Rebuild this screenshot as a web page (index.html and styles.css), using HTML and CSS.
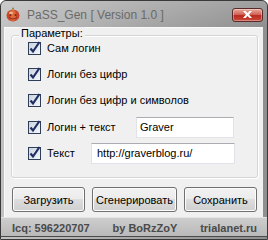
FILE: index.html
```html
<!DOCTYPE html>
<html lang="ru">
<head>
    <meta charset="UTF-8">
    <title>PaSS_Gen</title>
    <link rel="stylesheet" href="styles.css">
</head>
<body>
    <div class="window">
        <div class="titlebar">
            <svg class="app-icon" width="14" height="15" viewBox="0 0 14 15">
                <path d="M6 2 L7 0 L8 2" fill="#6b7d2e"/>
                <ellipse cx="7" cy="8.5" rx="6.5" ry="6" fill="#c9472a"/>
                <ellipse cx="7" cy="8.5" rx="3" ry="6" fill="#e06a3a"/>
                <ellipse cx="5" cy="6" rx="2" ry="1.5" fill="#f4b48a"/>
                <path d="M3 10 Q7 14 11 10" fill="none" stroke="#8c2a16" stroke-width="1"/>
                <circle cx="4.5" cy="8" r="1" fill="#7a2410"/>
                <circle cx="9.5" cy="8" r="1" fill="#7a2410"/>
            </svg>
            <span class="title">PaSS_Gen [ Version 1.0 ]</span>
            <div class="close-btn">
                <svg width="9" height="7" viewBox="0 0 9 7">
                    <path d="M0 0 H2.5 L4.5 2 L6.5 0 H9 L6 3.5 L9 7 H6.5 L4.5 5 L2.5 7 H0 L3 3.5 Z" fill="#fff"/>
                </svg>
            </div>
        </div>

        <div class="client">
            <div class="group">
                <span class="group-title">Параметры:</span>
                <div class="option">
                    <svg class="check" width="14" height="14" viewBox="0 0 14 14">
                        <rect x="0.5" y="1.5" width="12" height="12" fill="url(#cbg)" stroke="#2f3e58"/>
                        <path d="M2.5 7.5 L5 10.5 L11.5 1" fill="none" stroke="#1f2f63" stroke-width="2.2"/>
                    </svg>
                    <span>Сам логин</span>
                </div>
                <div class="option">
                    <svg class="check" width="14" height="14" viewBox="0 0 14 14">
                        <rect x="0.5" y="1.5" width="12" height="12" fill="url(#cbg)" stroke="#2f3e58"/>
                        <path d="M2.5 7.5 L5 10.5 L11.5 1" fill="none" stroke="#1f2f63" stroke-width="2.2"/>
                    </svg>
                    <span>Логин без цифр</span>
                </div>
                <div class="option">
                    <svg class="check" width="14" height="14" viewBox="0 0 14 14">
                        <rect x="0.5" y="1.5" width="12" height="12" fill="url(#cbg)" stroke="#2f3e58"/>
                        <path d="M2.5 7.5 L5 10.5 L11.5 1" fill="none" stroke="#1f2f63" stroke-width="2.2"/>
                    </svg>
                    <span>Логин без цифр и символов</span>
                </div>
                <div class="option option-input">
                    <svg class="check" width="14" height="14" viewBox="0 0 14 14">
                        <rect x="0.5" y="1.5" width="12" height="12" fill="url(#cbg)" stroke="#2f3e58"/>
                        <path d="M2.5 7.5 L5 10.5 L11.5 1" fill="none" stroke="#1f2f63" stroke-width="2.2"/>
                    </svg>
                    <span class="label-wide">Логин + текст</span>
                    <input class="field field-short" type="text" value="Graver">
                </div>
                <div class="option">
                    <svg class="check" width="14" height="14" viewBox="0 0 14 14">
                        <rect x="0.5" y="1.5" width="12" height="12" fill="url(#cbg)" stroke="#2f3e58"/>
                        <path d="M2.5 7.5 L5 10.5 L11.5 1" fill="none" stroke="#1f2f63" stroke-width="2.2"/>
                    </svg>
                    <span class="label-narrow">Текст</span>
                    <input class="field field-long" type="text" value="http://graverblog.ru/">
                </div>
            </div>

            <div class="buttons">
                <button class="btn btn-load">Загрузить</button>
                <button class="btn btn-gen">Сгенерировать</button>
                <button class="btn btn-save">Сохранить</button>
            </div>
        </div>

        <div class="statusbar">
            <span>Icq: 596220707</span>
            <span>by BoRzZoY</span>
            <span>trialanet.ru</span>
        </div>
    </div>

    <svg width="0" height="0" class="defs">
        <defs>
            <linearGradient id="cbg" x1="0" y1="0" x2="1" y2="1">
                <stop offset="0" stop-color="#c9d2de"/>
                <stop offset="1" stop-color="#f6f8fa"/>
            </linearGradient>
        </defs>
    </svg>
</body>
</html>
```

FILE: styles.css
```css
* {
    box-sizing: border-box;
}

body {
    margin: 0;
    font-family: "Liberation Sans", Arial, sans-serif;
    font-size: 11px;
    background: #fff;
}

.defs {
    display: block;
}

.window {
    width: 268px;
    height: 240px;
    display: flex;
    flex-direction: column;
    background: linear-gradient(to right, #c2c2c2, #a8a8a8 50%, #8f8f8f);
    border: 1px solid #3a3a3a;
    border-radius: 6px 6px 0 0;
    overflow: hidden;
}

.titlebar {
    height: 26px;
    display: flex;
    align-items: center;
    flex-shrink: 0;
    padding-left: 5px;
    background: linear-gradient(to bottom, rgba(255,255,255,0.15), rgba(0,0,0,0));
}

.app-icon {
    margin-right: 7px;
    margin-top: 1px;
}

.title {
    color: #6a6a6a;
    font-size: 12px;
    margin-top: 1px;
}

.close-btn {
    margin-left: auto;
    margin-right: 4px;
    margin-top: 1px;
    width: 31px;
    height: 14px;
    border: 1px solid #5a2a2a;
    border-radius: 3px;
    background: linear-gradient(to bottom, #e7a99a, #d4665a 45%, #b8291f 55%, #cc4a3c);
    display: flex;
    align-items: center;
    justify-content: center;
    box-shadow: inset 0 0 0 1px rgba(255,255,255,0.35);
}

.client {
    margin: 0 4px 0 3px;
    height: 190px;
    background: #f0f0f0;
    border-left: 1px solid #fafafa;
    border-top: 1px solid #fafafa;
    display: flex;
    flex-direction: column;
}

.group {
    margin: 7px 5px 0 6px;
    padding: 0 0 0 16px;
    height: 143px;
    border: 1px solid #d5d5d5;
    border-radius: 3px;
    box-shadow: inset 1px 1px 0 #fff, 1px 1px 0 #fff;
}

.group-title {
    display: block;
    width: max-content;
    height: 13px;
    line-height: 13px;
    margin: -9px 0 0 -9px;
    padding: 0 2px;
    background: #f0f0f0;
    color: #000;
}

.option {
    display: flex;
    align-items: center;
    height: 26px;
    color: #000;
}

.group-title + .option {
    margin-top: -5px;
}

.option-input {
    margin-top: 1px;
}

.check {
    margin-right: 5px;
    margin-top: -1px;
    flex-shrink: 0;
}

.label-wide {
    width: 89px;
}

.label-narrow {
    width: 44px;
}

.field {
    height: 21px;
    border: 1px solid #e2e3ea;
    border-top-color: #abadb3;
    background: #fff;
    font-family: inherit;
    font-size: 11px;
    padding: 0 3px;
    color: #000;
}

.field-short {
    width: 98px;
}

.field-long {
    width: 144px;
    padding-left: 5px;
}

.buttons {
    display: flex;
    gap: 7px;
    margin: 9px 5px 0 7px;
}

.btn {
    height: 25px;
    border: 1px solid #707070;
    border-radius: 3px;
    background: linear-gradient(to bottom, #f2f2f2, #ebebeb 50%, #dddddd 50%, #cfcfcf);
    box-shadow: inset 0 0 0 1px #fcfcfc;
    font-family: inherit;
    font-size: 11px;
    color: #000;
    padding: 0;
}

.btn-load {
    width: 73px;
}

.btn-gen {
    width: 85px;
}

.btn-save {
    width: 73px;
}

.statusbar {
    height: 20px;
    display: flex;
    justify-content: space-between;
    align-items: center;
    padding: 1px 10px 0 11px;
    background: linear-gradient(to bottom, #cdcdcd, #b9b9b9);
    border-top: 1px solid #e4e4e4;
    border-bottom: 1px solid #4a4a4a;
    color: #4a4a4a;
    font-weight: bold;
    font-size: 11px;
}
```
